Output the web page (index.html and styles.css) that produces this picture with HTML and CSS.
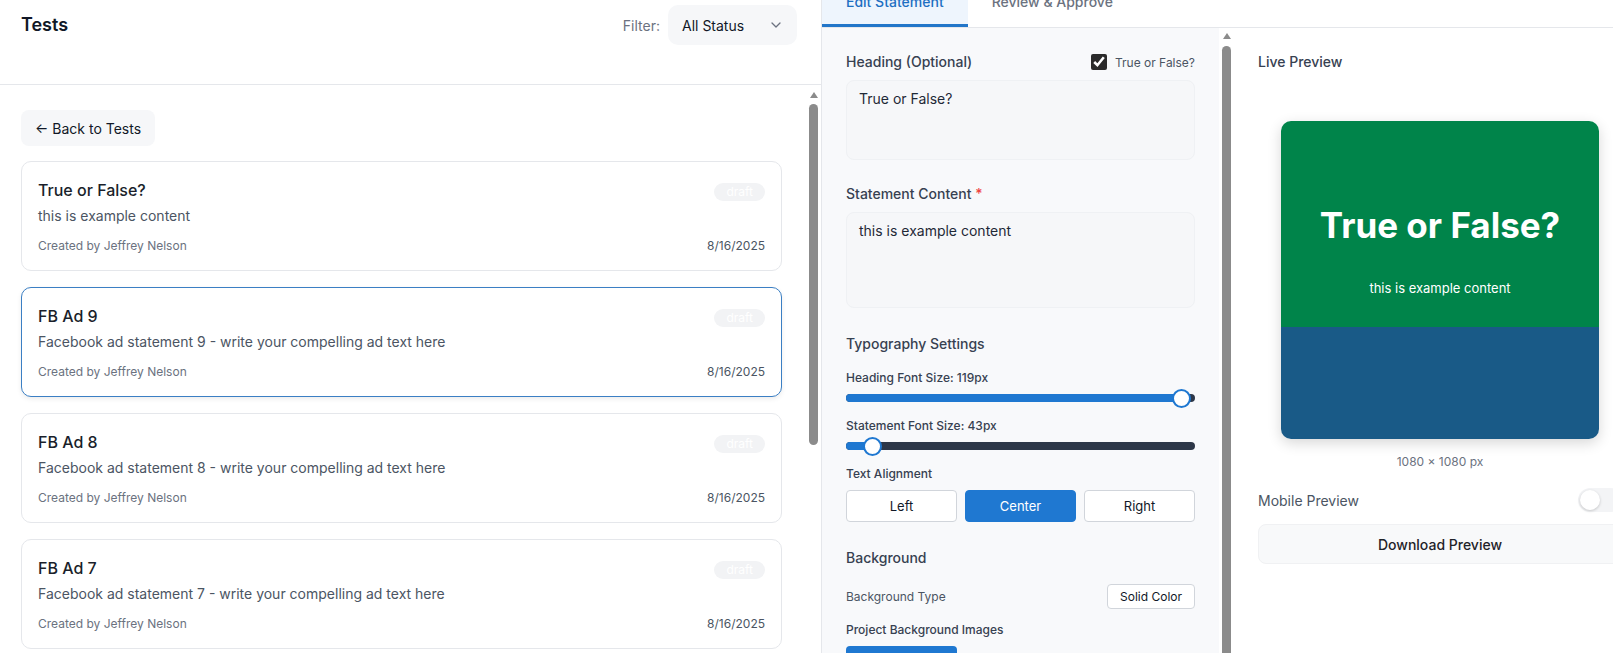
FILE: index.html
```html
<!DOCTYPE html>
<html lang="en">
<head>
<meta charset="utf-8">
<title>Tests</title>
<link rel="stylesheet" href="styles.css">
</head>
<body>
<div class="app">
  <aside class="tests">
    <header class="tests-header">
      <h1 class="tests-title">Tests</h1>
      <div class="filter">
        <span class="filter-label">Filter:</span>
        <div class="select">
          <span>All Status</span>
          <svg class="chevron" width="10" height="6" viewBox="0 0 10 6"><path d="M1 1l4 4 4-4" fill="none" stroke="#6b7280" stroke-width="1.3" stroke-linecap="round" stroke-linejoin="round"/></svg>
        </div>
      </div>
    </header>
    <div class="list-area">
      <div class="tests-list">
        <button class="back-btn">← Back to Tests</button>
        <div class="cards">
          <article class="card">
            <div class="card-head"><h2 class="card-title">True or False?</h2><span class="badge">draft</span></div>
            <p class="card-desc">this is example content</p>
            <div class="card-meta"><span>Created by Jeffrey Nelson</span><span class="card-date">8/16/2025</span></div>
          </article>
          <article class="card selected">
            <div class="card-head"><h2 class="card-title">FB Ad 9</h2><span class="badge">draft</span></div>
            <p class="card-desc">Facebook ad statement 9 - write your compelling ad text here</p>
            <div class="card-meta"><span>Created by Jeffrey Nelson</span><span class="card-date">8/16/2025</span></div>
          </article>
          <article class="card">
            <div class="card-head"><h2 class="card-title">FB Ad 8</h2><span class="badge">draft</span></div>
            <p class="card-desc">Facebook ad statement 8 - write your compelling ad text here</p>
            <div class="card-meta"><span>Created by Jeffrey Nelson</span><span class="card-date">8/16/2025</span></div>
          </article>
          <article class="card">
            <div class="card-head"><h2 class="card-title">FB Ad 7</h2><span class="badge">draft</span></div>
            <p class="card-desc">Facebook ad statement 7 - write your compelling ad text here</p>
            <div class="card-meta"><span>Created by Jeffrey Nelson</span><span class="card-date">8/16/2025</span></div>
          </article>
        </div>
      </div>
      <div class="vscroll vscroll-list" aria-hidden="true">
        <span class="vscroll-arrow"></span>
        <span class="vscroll-thumb" style="height:341px"></span>
      </div>
    </div>
  </aside>

  <main class="editor">
    <nav class="tabs">
      <div class="tab active">Edit Statement</div>
      <div class="tab">Review &amp; Approve</div>
    </nav>
    <div class="panes">
      <div class="edit-col">
        <section class="edit-pane">
          <div class="field">
            <div class="label-row">
              <label class="field-label">Heading (Optional)</label>
              <label class="check"><input type="checkbox" checked><span>True or False?</span></label>
            </div>
            <textarea class="input input-heading" readonly>True or False?</textarea>
          </div>
          <div class="field">
            <div class="label-row">
              <label class="field-label">Statement Content <span class="req">*</span></label>
            </div>
            <textarea class="input input-content" readonly>this is example content</textarea>
          </div>

          <h3 class="section-title">Typography Settings</h3>
          <div class="small-label first">Heading Font Size: 119px</div>
          <div class="slider"><div class="track"><div class="fill" style="width:96%"><span class="thumb"></span></div></div></div>
          <div class="small-label">Statement Font Size: 43px</div>
          <div class="slider"><div class="track"><div class="fill" style="width:7.5%"><span class="thumb"></span></div></div></div>
          <div class="small-label">Text Alignment</div>
          <div class="align-group">
            <button class="align-btn">Left</button>
            <button class="align-btn active">Center</button>
            <button class="align-btn">Right</button>
          </div>

          <h3 class="section-title">Background</h3>
          <div class="bg-row">
            <span class="muted-label">Background Type</span>
            <button class="solid-btn">Solid Color</button>
          </div>
          <div class="small-label images-label">Project Background Images</div>
          <div class="upload-btn"></div>
        </section>
        <div class="vscroll vscroll-edit" aria-hidden="true">
          <span class="vscroll-arrow"></span>
          <span class="vscroll-thumb" style="height:640px"></span>
        </div>
      </div>

      <section class="preview-pane">
        <div class="preview-title">Live Preview</div>
        <div class="canvas-wrap">
          <div class="canvas">
            <div class="canvas-top">
              <div class="canvas-heading">True or False?</div>
              <div class="canvas-text">this is example content</div>
            </div>
            <div class="canvas-bottom"></div>
          </div>
        </div>
        <div class="canvas-size">1080 × 1080 px</div>
        <div class="mobile-row">
          <span class="mobile-label">Mobile Preview</span>
          <span class="toggle"><span class="knob"></span></span>
        </div>
        <button class="download-btn">Download Preview</button>
      </section>
    </div>
  </main>
</div>
</body>
</html>
```

FILE: styles.css
```css
html, body {
  margin: 0;
  height: 100%;
  overflow: hidden;
}
body {
  font-family: Inter, "Noto Sans", "Liberation Sans", sans-serif;
  color: #111827;
  background: #fff;
}
button, textarea {
  font-family: inherit;
}

.app {
  display: flex;
  align-items: flex-start;
  width: 1646px;
  height: 653px;
}

/* ---------- left panel ---------- */
.tests {
  width: 822px;
  flex: none;
  height: 653px;
  box-sizing: border-box;
  border-right: 1px solid #e5e7eb;
  display: flex;
  flex-direction: column;
}
.tests-header {
  height: 85px;
  flex: none;
  box-sizing: border-box;
  border-bottom: 1px solid #e5e7eb;
  padding: 5px 24px 0 21px;
  display: flex;
  justify-content: space-between;
  align-items: flex-start;
}
.tests-title {
  margin: 0;
  font-size: 18px;
  font-weight: 600;
  line-height: 40px;
  color: #111827;
}
.filter {
  display: flex;
  align-items: center;
  gap: 8px;
}
.filter-label {
  font-size: 14px;
  color: #6b7280;
}
.select {
  width: 129px;
  height: 40px;
  box-sizing: border-box;
  padding: 0 16px 0 14px;
  border-radius: 10px;
  background: #f6f7f9;
  display: flex;
  align-items: center;
  justify-content: space-between;
  font-size: 14px;
  color: #111827;
}

.list-area {
  flex: 1;
  min-height: 0;
  display: flex;
}
.tests-list {
  flex: 1;
  min-width: 0;
  overflow: hidden;
  padding: 25px 24px 0 21px;
}
.back-btn {
  height: 36px;
  padding: 0 14px;
  border: 0;
  border-radius: 8px;
  background: #f6f7f9;
  font-size: 14px;
  color: #111827;
}
.cards {
  margin-top: 15px;
  display: flex;
  flex-direction: column;
  gap: 16px;
}
.card {
  border: 1px solid #e5e7eb;
  border-radius: 10px;
  padding: 16px;
  background: #fff;
}
.card.selected {
  border-color: #3b7fc4;
  box-shadow: 0 2px 5px rgba(0, 0, 0, 0.08);
}
.card-head {
  display: flex;
  justify-content: space-between;
  align-items: center;
}
.card-title {
  margin: 0;
  font-size: 16px;
  font-weight: 450;
  line-height: 24px;
  color: #1a1f2b;
}
.badge {
  height: 18px;
  padding: 0 12px;
  border-radius: 9px;
  background: #f2f3f5;
  color: #fff;
  font-size: 12px;
  line-height: 18px;
  margin-top: 4px;
}
.card-desc {
  margin: 4px 0 0;
  font-size: 14px;
  line-height: 20px;
  color: #4b5563;
}
.card-meta {
  margin-top: 12px;
  display: flex;
  justify-content: space-between;
  font-size: 12px;
  line-height: 16px;
  color: #6b7280;
}
.card-date {
  color: #4b5563;
}

/* ---------- drawn scrollbars ---------- */
.vscroll {
  width: 15px;
  flex: none;
  background: #fff;
  display: flex;
  flex-direction: column;
  align-items: center;
  overflow: hidden;
}
.vscroll-list {
  padding-top: 7px;
}
.vscroll-edit {
  padding-top: 5px;
}
.vscroll-arrow {
  width: 0;
  height: 0;
  flex: none;
  border-left: 4.5px solid transparent;
  border-right: 4.5px solid transparent;
  border-bottom: 6px solid #8b8b8b;
}
.vscroll-thumb {
  width: 9px;
  flex: none;
  margin-top: 6px;
  border-radius: 5px;
  background: #8b8b8b;
}
.vscroll-edit .vscroll-thumb {
  margin-top: 7px;
}

/* ---------- editor ---------- */
.editor {
  width: 824px;
  flex: none;
  height: 800px;
  margin-top: -20px;
  display: flex;
  flex-direction: column;
}
.tabs {
  display: flex;
  border-bottom: 1px solid #e5e7eb;
  flex: none;
}
.tab {
  padding: 12px 24px;
  border-bottom: 3px solid transparent;
  font-size: 14px;
  font-weight: 500;
  line-height: 20px;
  color: #6b7280;
}
.tab.active {
  background: #eef5fd;
  border-bottom-color: #2276c9;
  color: #1d6fc2;
}
.panes {
  flex: 1;
  min-height: 0;
  display: flex;
}
.edit-col {
  width: 412px;
  flex: none;
  display: flex;
}
.edit-pane {
  flex: 1;
  min-width: 0;
  box-sizing: border-box;
  padding: 24px;
  overflow: hidden;
  background: #f8f9fb;
}
.field + .field {
  margin-top: 24px;
}
.label-row {
  display: flex;
  justify-content: space-between;
  align-items: center;
  margin-bottom: 8px;
  height: 20px;
}
.field-label {
  font-size: 14px;
  font-weight: 500;
  line-height: 20px;
  color: #374151;
}
.req {
  color: #ef4444;
}
.check {
  display: flex;
  align-items: center;
  gap: 8px;
  font-size: 12px;
  color: #4b5563;
}
.check input {
  width: 16px;
  height: 16px;
  margin: 0;
  accent-color: #2b2b2b;
}
.input {
  display: block;
  width: 100%;
  box-sizing: border-box;
  border: 1px solid #eff1f4;
  border-radius: 8px;
  background: #f6f7f9;
  padding: 8px 12px;
  font-size: 14px;
  line-height: 20px;
  color: #1f2937;
  resize: none;
  outline: none;
}
.input-heading {
  height: 80px;
}
.input-content {
  height: 96px;
}
.section-title {
  margin: 26px 0 0;
  font-size: 14px;
  font-weight: 500;
  line-height: 20px;
  color: #374151;
}
.small-label {
  margin-top: 10px;
  font-size: 12px;
  font-weight: 500;
  line-height: 16px;
  color: #374151;
}
.small-label.first {
  margin-top: 16px;
}
.slider {
  height: 20px;
  margin-top: 2px;
  display: flex;
  align-items: center;
}
.track {
  flex: 1;
  height: 8px;
  border-radius: 4px;
  background: #2d3748;
  display: flex;
}
.fill {
  height: 100%;
  border-radius: 4px 0 0 4px;
  background: #1f78d1;
  display: flex;
  justify-content: flex-end;
  align-items: center;
}
.thumb {
  flex: none;
  width: 19px;
  height: 19px;
  box-sizing: border-box;
  margin-right: -9.5px;
  border: 2px solid #1f78d1;
  border-radius: 50%;
  background: #fff;
}
.align-group {
  margin-top: 8px;
  display: grid;
  grid-template-columns: repeat(3, 1fr);
  gap: 8px;
}
.align-btn {
  height: 32px;
  border: 1px solid #d1d5db;
  border-radius: 4px;
  background: #fff;
  font-size: 13px;
  color: #111827;
}
.align-btn.active {
  background: #1f78d1;
  border-color: #1f78d1;
  color: #fff;
}
.bg-row {
  margin-top: 16px;
  display: flex;
  justify-content: space-between;
  align-items: center;
}
.muted-label {
  font-size: 12px;
  color: #4b5563;
}
.solid-btn {
  height: 25px;
  padding: 0 12px;
  border: 1px solid #d1d5db;
  border-radius: 4px;
  background: #fff;
  font-size: 12px;
  color: #111827;
}
.images-label {
  margin-top: 13px;
}
.upload-btn {
  width: 111px;
  height: 32px;
  margin-top: 8px;
  border-radius: 4px;
  background: #1f78d1;
}

/* ---------- preview ---------- */
.preview-pane {
  width: 412px;
  flex: none;
  box-sizing: border-box;
  padding: 24px;
}
.preview-title {
  font-size: 14px;
  font-weight: 500;
  line-height: 20px;
  color: #374151;
}
.canvas-wrap {
  margin-top: 49px;
  display: flex;
  justify-content: center;
}
.canvas {
  width: 318px;
  height: 318px;
  border-radius: 10px;
  overflow: hidden;
  box-shadow: 0 4px 14px rgba(0, 0, 0, 0.16);
  display: flex;
  flex-direction: column;
}
.canvas-top {
  height: 206px;
  flex: none;
  box-sizing: border-box;
  padding-top: 83px;
  background: #00844a;
  color: #fff;
  display: flex;
  flex-direction: column;
  align-items: center;
}
.canvas-heading {
  font-size: 35px;
  font-weight: 700;
  line-height: 42px;
}
.canvas-text {
  margin-top: 34px;
  font-size: 13px;
  line-height: 16px;
}
.canvas-bottom {
  flex: 1;
  background: #195a87;
}
.canvas-size {
  margin-top: 15px;
  text-align: center;
  font-size: 12px;
  line-height: 16px;
  color: #6b7280;
}
.mobile-row {
  margin-top: 18px;
  display: flex;
  justify-content: space-between;
  align-items: center;
}
.mobile-label {
  font-size: 14px;
  color: #4b5563;
}
.toggle {
  width: 44px;
  height: 24px;
  box-sizing: border-box;
  padding: 2px;
  border-radius: 12px;
  background: #f3f4f6;
  display: flex;
  align-items: center;
}
.knob {
  width: 20px;
  height: 20px;
  border-radius: 50%;
  background: #fff;
  box-shadow: 0 1px 3px rgba(0, 0, 0, 0.2);
}
.download-btn {
  display: block;
  width: 100%;
  height: 40px;
  margin-top: 12px;
  border: 1px solid #f0f1f3;
  border-radius: 8px;
  background: #f8f9fa;
  font-size: 14px;
  font-weight: 500;
  color: #1f2329;
}
```
